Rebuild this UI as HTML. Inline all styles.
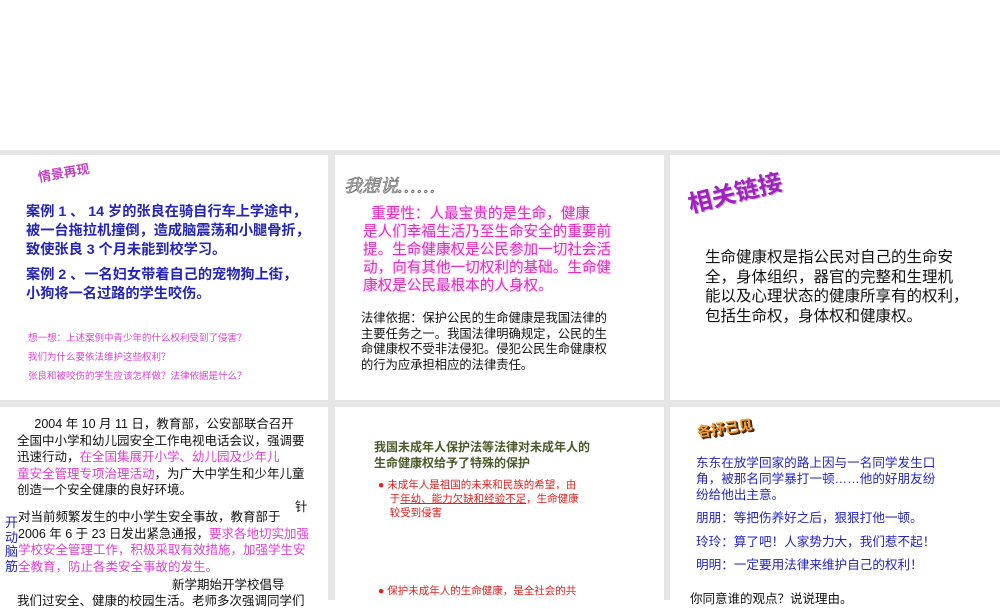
<!DOCTYPE html>
<html><head><meta charset="utf-8"><style>
*{margin:0;padding:0;box-sizing:border-box}
body{width:1000px;height:600px;overflow:hidden;background:#fff;position:relative;font-family:"Liberation Sans","Noto Sans CJK SC",sans-serif}
.bg{position:absolute;left:0;top:150px;width:1000px;height:450px;background:#e6e6e6}
.s{position:absolute;background:#fff;overflow:hidden}
.a{position:absolute;white-space:nowrap}
</style></head><body>
<div class="bg"></div>
<div class="s" style="left:0;top:155px;width:328px;height:245px"></div>
<div class="s" style="left:335px;top:155px;width:329px;height:245px"></div>
<div class="s" style="left:670px;top:155px;width:330px;height:245px"></div>
<div class="s" style="left:0;top:407px;width:328px;height:193px"></div>
<div class="s" style="left:335px;top:407px;width:329px;height:193px"></div>
<div class="s" style="left:670px;top:407px;width:330px;height:193px"></div>

<!-- slide 1 -->
<div class="a" style="left:38px;top:167px;font-size:13px;font-weight:bold;color:#c040c0;transform:rotate(-10deg);transform-origin:left center">情景再现</div>
<div class="a" style="left:26px;top:203px;font-size:14.2px;font-weight:bold;color:#2424b8;line-height:19px">案例 1 、 14 岁的张良在骑自行车上学途中，<br>被一台拖拉机撞倒，造成脑震荡和小腿骨折，<br>致使张良 3 个月未能到校学习。</div>
<div class="a" style="left:26px;top:266px;font-size:14.2px;font-weight:bold;color:#2424b8;line-height:19px">案例 2 、一名妇女带着自己的宠物狗上街，<br>小狗将一名过路的学生咬伤。</div>
<div class="a" style="left:28px;top:329px;font-size:9.5px;color:#e040d0;line-height:19px">想一想：上述案例中青少年的什么权利受到了侵害？<br>我们为什么要依法维护这些权利？<br>张良和被咬伤的学生应该怎样做？法律依据是什么？</div>

<!-- slide 2 -->
<div class="a" style="left:344px;top:172px;font-size:18px;font-family:'Noto Serif CJK SC',serif;color:#fff;-webkit-text-stroke:0.8px #777;font-style:italic">我想说<span style="font-size:9px;letter-spacing:2px">。。。。。。</span></div>
<div class="a" style="left:363px;top:205px;font-size:14.6px;color:#e030c0;line-height:18px;text-shadow:0 0 3px #f8b0f0">&nbsp;&nbsp;重要性：人最宝贵的是生命，健康<br>是人们幸福生活乃至生命安全的重要前<br>提。生命健康权是公民参加一切社会活<br>动，向有其他一切权利的基础。生命健<br>康权是公民最根本的人身权。</div>
<div class="a" style="left:361px;top:311px;font-size:12.3px;color:#111;line-height:15.5px">法律依据：保护公民的生命健康是我国法律的<br>主要任务之一。我国法律明确规定，公民的生<br>命健康权不受非法侵犯。侵犯公民生命健康权<br>的行为应承担相应的法律责任。</div>

<!-- slide 3 -->
<div class="a" style="left:688px;top:185px;font-size:24px;font-weight:bold;color:#a020c0;transform:rotate(-14deg);transform-origin:left center;text-shadow:1px 1px 1px #c0a0d0">相关链接</div>
<div class="a" style="left:705px;top:248px;font-size:15.5px;color:#111;line-height:19.5px">生命健康权是指公民对自己的生命安<br>全，身体组织，器官的完整和生理机<br>能以及心理状态的健康所享有的权利，<br>包括生命权，身体权和健康权。</div>

<!-- slide 4 -->
<div class="a" style="left:17px;top:416px;font-size:12.5px;color:#111;line-height:16.5px">&nbsp;&nbsp;&nbsp;&nbsp;&nbsp;2004 年 10 月 11 日，教育部，公安部联合召开<br>全国中小学和幼儿园安全工作电视电话会议，强调要<br>迅速行动，<span style="color:#e040d0">在全国集展开小学、幼儿园及少年儿</span><br><span style="color:#e040d0">童安全管理专项治理活动</span>，为广大中学生和少年儿童<br>创造一个安全健康的良好环境。</div>
<div class="a" style="left:295px;top:496px;font-size:12.5px;color:#111">针</div>
<div class="a" style="left:18px;top:509px;font-size:12.5px;color:#111;line-height:16.5px">对当前频繁发生的中小学生安全事故，教育部于<br>2006 年 6 于 23 日发出紧急通报，<span style="color:#e040d0">要求各地切实加强</span><br><span style="color:#e040d0">学校安全管理工作，积极采取有效措施，加强学生安</span><br><span style="color:#e040d0">全教育，防止各类安全事故的发生。</span></div>
<div class="a" style="left:5px;top:516px;font-size:13px;color:#2424c0;line-height:14.5px;white-space:normal;width:14px">开动脑筋</div>
<div class="a" style="left:172px;top:574px;font-size:12.5px;color:#111">新学期始开学校倡导</div>
<div class="a" style="left:17px;top:590px;font-size:12.5px;color:#111">我们过安全、健康的校园生活。老师多次强调同学们</div>

<!-- slide 5 -->
<div class="a" style="left:374px;top:439px;font-size:12px;font-weight:bold;color:#4a5a2a;line-height:16px">我国未成年人保护法等法律对未成年人的<br>生命健康权给予了特殊的保护</div>
<div class="a" style="left:378px;top:478px;font-size:10.5px;color:#e02020;line-height:14px">● 未成年人是祖国的未来和民族的希望，由<br>&nbsp;&nbsp;&nbsp;&nbsp;于<u>年幼、能力欠缺和经验不足</u>，生命健康<br>&nbsp;&nbsp;&nbsp;&nbsp;较受到侵害</div>
<div class="a" style="left:378px;top:583px;font-size:10.5px;color:#e02020">● 保护未成年人的生命健康，是全社会的共</div>

<!-- slide 6 -->
<div class="a" style="left:697px;top:422px;font-size:14px;font-weight:bold;color:#f0a030;transform:rotate(-8deg);transform-origin:left center;text-shadow:1px 1px 0 #603010,2px 2px 0 #402008">各抒己见</div>
<div class="a" style="left:696px;top:455px;font-size:12.6px;color:#2424c0;line-height:16px">东东在放学回家的路上因与一名同学发生口<br>角，被那名同学暴打一顿……他的好朋友纷<br>纷给他出主意。</div>
<div class="a" style="left:696px;top:507px;font-size:12.6px;color:#2424c0;line-height:23.5px">朋朋：等把伤养好之后，狠狠打他一顿。<br>玲玲：算了吧！人家势力大，我们惹不起！<br>明明：一定要用法律来维护自己的权利！</div>
<div class="a" style="left:690px;top:588px;font-size:12.5px;color:#111">你同意谁的观点？说说理由。</div>
</body></html>
